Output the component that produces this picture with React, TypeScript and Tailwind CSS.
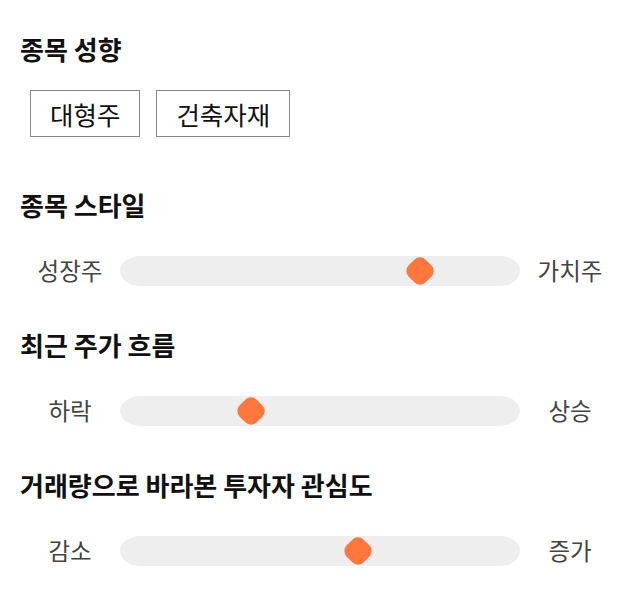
import React from "react";

const tags = ["대형주", "건축자재"];

const sliders = [
  { title: "종목 스타일", left: "성장주", right: "가치주", value: 0.75 },
  { title: "최근 주가 흐름", left: "하락", right: "상승", value: 0.328 },
  { title: "거래량으로 바라본 투자자 관심도", left: "감소", right: "증가", value: 0.595 },
];

const Heading = ({ children }: { children: React.ReactNode }) => (
  <h2 className="text-[26px] leading-[32px] font-bold text-[#111]">{children}</h2>
);

const SliderRow = ({ left, right, value }: { left: string; right: string; value: number }) => (
  <div className="mt-[32px] grid grid-cols-[100px_1fr_100px] items-center h-[30px]">
    <span className="text-center text-[23.5px] text-[#444]">{left}</span>
    <div className="relative h-[30px] bg-[#eeeeee] rounded-[20px_/_15px]">
      {/* thumb */}
      <div
        className="absolute top-1/2 w-[24px] h-[24px] -translate-x-1/2 -translate-y-1/2 rotate-45 rounded-[8px] bg-[#ff773d]"
        style={{ left: `${value * 100}%` }}
      />
    </div>
    <span className="text-center text-[23.5px] text-[#444]">{right}</span>
  </div>
);

export default function App() {
  return (
    <div
      className="w-[640px] h-[606px] bg-white px-5 pt-[33px]"
      style={{ fontFamily: '"Noto Sans CJK KR", "Noto Sans", sans-serif' }}
    >
      <Heading>종목 성향</Heading>
      <div className="mt-[25px] flex gap-4 pl-[10px]">
        {tags.map((t) => (
          <div
            key={t}
            className="border border-[#888] px-[19px] py-[5px] text-[25.5px] leading-[35px] text-[#111]"
          >
            {t}
          </div>
        ))}
      </div>

      <div className="mt-[52px] flex flex-col gap-[46px]">
        {sliders.map((s) => (
          <section key={s.title}>
            <Heading>{s.title}</Heading>
            <SliderRow left={s.left} right={s.right} value={s.value} />
          </section>
        ))}
      </div>
    </div>
  );
}
